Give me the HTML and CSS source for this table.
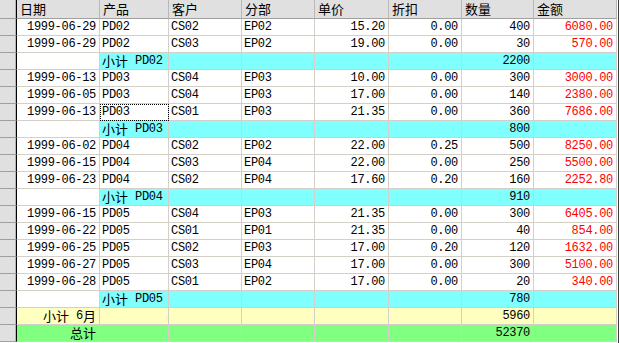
FILE: index.html
```html
<!DOCTYPE html>
<html>
<head>
<meta charset="utf-8">
<link rel="stylesheet" href="styles.css">
</head>
<body>
<div class="grid">
  <div class="row head">
    <div class="ind"></div>
    <div class="c">日期</div><div class="c">产品</div><div class="c">客户</div><div class="c">分部</div>
    <div class="c">单价</div><div class="c">折扣</div><div class="c">数量</div><div class="c">金额</div>
  </div>

  <div class="row"><div class="ind"></div><div class="c r">1999-06-29</div><div class="c">PD02</div><div class="c">CS02</div><div class="c">EP02</div><div class="c r">15.20</div><div class="c r">0.00</div><div class="c r">400</div><div class="c r red">6080.00</div></div>
  <div class="row"><div class="ind"></div><div class="c r">1999-06-29</div><div class="c">PD02</div><div class="c">CS03</div><div class="c">EP02</div><div class="c r">19.00</div><div class="c r">0.00</div><div class="c r">30</div><div class="c r red">570.00</div></div>
  <div class="row sub"><div class="ind"></div><div class="c w"></div><div class="c"><span class="zh sp">小计</span><span>PD02</span></div><div class="c"></div><div class="c"></div><div class="c"></div><div class="c"></div><div class="c r">2200</div><div class="c"></div></div>

  <div class="row"><div class="ind"></div><div class="c r">1999-06-13</div><div class="c">PD03</div><div class="c">CS04</div><div class="c">EP03</div><div class="c r">10.00</div><div class="c r">0.00</div><div class="c r">300</div><div class="c r red">3000.00</div></div>
  <div class="row"><div class="ind"></div><div class="c r">1999-06-05</div><div class="c">PD03</div><div class="c">CS04</div><div class="c">EP03</div><div class="c r">17.00</div><div class="c r">0.00</div><div class="c r">140</div><div class="c r red">2380.00</div></div>
  <div class="row"><div class="ind"></div><div class="c r">1999-06-13</div><div class="c focus">PD03</div><div class="c">CS01</div><div class="c">EP03</div><div class="c r">21.35</div><div class="c r">0.00</div><div class="c r">360</div><div class="c r red">7686.00</div></div>
  <div class="row sub"><div class="ind"></div><div class="c w"></div><div class="c"><span class="zh sp">小计</span><span>PD03</span></div><div class="c"></div><div class="c"></div><div class="c"></div><div class="c"></div><div class="c r">800</div><div class="c"></div></div>

  <div class="row"><div class="ind"></div><div class="c r">1999-06-02</div><div class="c">PD04</div><div class="c">CS02</div><div class="c">EP02</div><div class="c r">22.00</div><div class="c r">0.25</div><div class="c r">500</div><div class="c r red">8250.00</div></div>
  <div class="row"><div class="ind"></div><div class="c r">1999-06-15</div><div class="c">PD04</div><div class="c">CS03</div><div class="c">EP04</div><div class="c r">22.00</div><div class="c r">0.00</div><div class="c r">250</div><div class="c r red">5500.00</div></div>
  <div class="row"><div class="ind"></div><div class="c r">1999-06-23</div><div class="c">PD04</div><div class="c">CS02</div><div class="c">EP04</div><div class="c r">17.60</div><div class="c r">0.20</div><div class="c r">160</div><div class="c r red">2252.80</div></div>
  <div class="row sub"><div class="ind"></div><div class="c w"></div><div class="c"><span class="zh sp">小计</span><span>PD04</span></div><div class="c"></div><div class="c"></div><div class="c"></div><div class="c"></div><div class="c r">910</div><div class="c"></div></div>

  <div class="row"><div class="ind"></div><div class="c r">1999-06-15</div><div class="c">PD05</div><div class="c">CS04</div><div class="c">EP03</div><div class="c r">21.35</div><div class="c r">0.00</div><div class="c r">300</div><div class="c r red">6405.00</div></div>
  <div class="row"><div class="ind"></div><div class="c r">1999-06-22</div><div class="c">PD05</div><div class="c">CS01</div><div class="c">EP01</div><div class="c r">21.35</div><div class="c r">0.00</div><div class="c r">40</div><div class="c r red">854.00</div></div>
  <div class="row"><div class="ind"></div><div class="c r">1999-06-25</div><div class="c">PD05</div><div class="c">CS02</div><div class="c">EP03</div><div class="c r">17.00</div><div class="c r">0.20</div><div class="c r">120</div><div class="c r red">1632.00</div></div>
  <div class="row"><div class="ind"></div><div class="c r">1999-06-27</div><div class="c">PD05</div><div class="c">CS03</div><div class="c">EP04</div><div class="c r">17.00</div><div class="c r">0.00</div><div class="c r">300</div><div class="c r red">5100.00</div></div>
  <div class="row"><div class="ind"></div><div class="c r">1999-06-28</div><div class="c">PD05</div><div class="c">CS01</div><div class="c">EP02</div><div class="c r">17.00</div><div class="c r">0.00</div><div class="c r">20</div><div class="c r red">340.00</div></div>
  <div class="row sub"><div class="ind"></div><div class="c w"></div><div class="c"><span class="zh sp">小计</span><span>PD05</span></div><div class="c"></div><div class="c"></div><div class="c"></div><div class="c"></div><div class="c r">780</div><div class="c"></div></div>

  <div class="row month"><div class="ind"></div><div class="c r"><span class="zh sp">小计</span><span>6</span><span class="zh">月</span></div><div class="c"></div><div class="c"></div><div class="c"></div><div class="c"></div><div class="c"></div><div class="c r">5960</div><div class="c"></div></div>
  <div class="row total"><div class="ind"></div><div class="c r"><span class="zh">总计</span></div><div class="c"></div><div class="c"></div><div class="c"></div><div class="c"></div><div class="c"></div><div class="c r">52370</div><div class="c"></div></div>
</div>
</body>
</html>
```

FILE: styles.css
```css
html, body {
  margin: 0;
  padding: 0;
  background: #ffffff;
}

.grid {
  width: 619px;
  height: 343px;
  box-sizing: border-box;
  background: #ffffff;
  border-right: 1px solid #404040;
  padding-right: 1px;
  overflow: hidden;
  font-family: "Liberation Mono", "Noto Sans CJK SC", monospace;
  font-size: 12px;
  letter-spacing: -0.3px;
  color: #000000;
}

.row {
  display: grid;
  grid-template-columns: 17px 83px 69px 73px 73px 74px 73px 72px 83px;
  height: 17px;
}

.c {
  box-sizing: border-box;
  height: 17px;
  display: flex;
  align-items: center;
  border-right: 1px solid #d4d0c8;
  border-bottom: 1px solid #d4d0c8;
  padding: 0 3px 0 2px;
  line-height: 14px;
  white-space: nowrap;
}

.r {
  justify-content: flex-end;
}

.red {
  color: #ff0000;
}

.zh {
  font-family: "Noto Sans CJK SC", sans-serif;
  font-size: 13px;
  line-height: 14px;
  letter-spacing: 0;
}

.sp {
  margin-right: 7px;
}

.ind {
  box-sizing: border-box;
  background: #e0e0e0;
  border-right: 1px solid #000000;
  border-bottom: 1px solid #a0a0a0;
  box-shadow: inset -1px 0 0 #b4b4b4;
}

.head {
  height: 19px;
}

.head .c {
  height: 19px;
  background: #e0e0e0;
  border-right-color: #b8b8b8;
  border-bottom-color: #a0a0a0;
  padding-left: 3px;
  font-family: "Noto Sans CJK SC", sans-serif;
  font-size: 13px;
  letter-spacing: 0;
}

.sub .c {
  background: #80ffff;
}

.sub .c.w {
  background: #ffffff;
}

.month .c {
  background: #ffffc0;
}

.total .c {
  background: #80ff80;
}

.focus {
  outline: 1px dotted #000000;
  outline-offset: -1px;
}
```
